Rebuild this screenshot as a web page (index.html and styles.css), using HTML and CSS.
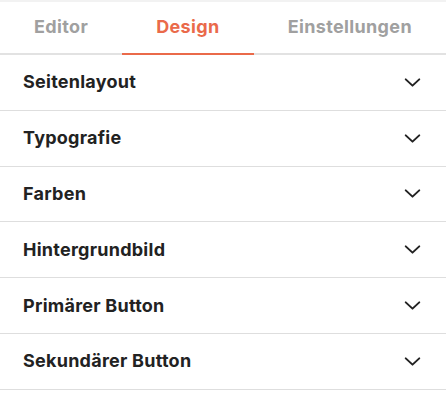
FILE: index.html
```html
<!DOCTYPE html>
<html lang="de">
<head>
<meta charset="utf-8">
<link rel="stylesheet" href="styles.css">
</head>
<body>
<div class="panel">
  <nav class="tabs">
    <div class="tab">Editor</div>
    <div class="tab active">Design</div>
    <div class="tab">Einstellungen</div>
  </nav>
  <ul class="sections">
    <li class="row"><span class="label">Seitenlayout</span><svg class="chev" viewBox="0 0 18 10"><path d="M1.5 1.5 L9 8.5 L16.5 1.5"/></svg></li>
    <li class="row"><span class="label">Typografie</span><svg class="chev" viewBox="0 0 18 10"><path d="M1.5 1.5 L9 8.5 L16.5 1.5"/></svg></li>
    <li class="row"><span class="label">Farben</span><svg class="chev" viewBox="0 0 18 10"><path d="M1.5 1.5 L9 8.5 L16.5 1.5"/></svg></li>
    <li class="row"><span class="label">Hintergrundbild</span><svg class="chev" viewBox="0 0 18 10"><path d="M1.5 1.5 L9 8.5 L16.5 1.5"/></svg></li>
    <li class="row"><span class="label">Primärer Button</span><svg class="chev" viewBox="0 0 18 10"><path d="M1.5 1.5 L9 8.5 L16.5 1.5"/></svg></li>
    <li class="row"><span class="label">Sekundärer Button</span><svg class="chev" viewBox="0 0 18 10"><path d="M1.5 1.5 L9 8.5 L16.5 1.5"/></svg></li>
  </ul>
</div>
</body>
</html>
```
FILE: styles.css
```css
html, body {
  margin: 0;
  padding: 0;
  background: #ffffff;
}
body {
  font-family: Inter, "Noto Sans", "Liberation Sans", sans-serif;
  color: #222222;
}
.panel {
  width: 446px;
  border-top: 2px solid #f2f2f2;
}
.tabs {
  display: flex;
  height: 51px;
  border-bottom: 2px solid #e2e2e2;
}
.tab {
  flex: auto;
  text-align: center;
  font-size: 18px;
  font-weight: 700;
  letter-spacing: 0.35px;
  line-height: 22px;
  padding-top: 14px;
  color: #a0a0a0;
  margin-bottom: -2px;
  border-bottom: 2px solid transparent;
}
.tab.active {
  color: #ea6a4a;
  border-bottom-color: #ea6a4a;
}
.sections {
  list-style: none;
  margin: 0;
  padding: 0;
}
.row {
  display: flex;
  align-items: center;
  justify-content: space-between;
  height: 54.8px;
  padding: 0 25px 0 23px;
  border-bottom: 1px solid #dedede;
}
.label {
  font-size: 18px;
  font-weight: 700;
  letter-spacing: 0.25px;
  line-height: 22px;
  color: #222222;
}
.chev {
  width: 17px;
  height: 9px;
  fill: none;
  stroke: #222222;
  stroke-width: 2.2;
  stroke-linecap: round;
  stroke-linejoin: round;
}
```
